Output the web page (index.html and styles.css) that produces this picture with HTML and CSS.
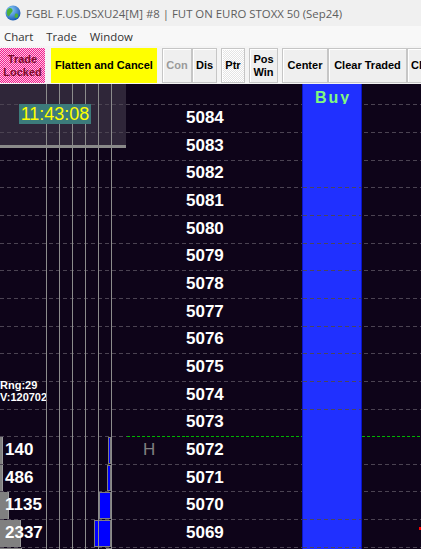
FILE: index.html
```html
<!DOCTYPE html>
<html lang="en">
<head>
    <meta charset="UTF-8">
    <meta name="viewport" content="width=device-width, initial-scale=1.0">
    <title>FGBL F.US.DSXU24[M] #8</title>
    <link rel="stylesheet" href="styles.css">
</head>
<body>
    <div class="window">
        <div class="titlebar">
            <svg class="globe" width="16" height="16" viewBox="0 0 16 16">
                <defs>
                    <radialGradient id="sea" cx="35%" cy="30%" r="75%">
                        <stop offset="0" stop-color="#8fd0ff"/>
                        <stop offset="1" stop-color="#1456b0"/>
                    </radialGradient>
                </defs>
                <circle cx="8" cy="8" r="7.5" fill="url(#sea)"/>
                <path d="M4 3.2c1.6-.6 3.2.4 3.6 1.9s-1 2.6-2 3.6-1 2.6-2.6 2.6C2 9.8 1.6 7.8 2 5.8c.3-1.1 1-2 2-2.6z" fill="#4db03a"/>
                <path d="M10.2 8.8c1-.5 2.6 0 3 1.1s-.5 2.5-1.6 3-2-.5-2-1.6.5-2 .6-2.5z" fill="#4db03a"/>
            </svg>
            <span>FGBL F.US.DSXU24[M] #8 | FUT ON EURO STOXX 50 (Sep24)</span>
        </div>

        <div class="menubar">
            <span>Chart</span>
            <span>Trade</span>
            <span>Window</span>
        </div>

        <div class="toolbar">
            <button class="tb locked">Trade<br>Locked</button>
            <button class="tb flatten">Flatten and Cancel</button>
            <button class="tb con">Con</button>
            <button class="tb dis">Dis</button>
            <button class="tb ptr">Ptr</button>
            <button class="tb poswin">Pos<br>Win</button>
            <button class="tb center">Center</button>
            <button class="tb clear">Clear Traded</button>
            <button class="tb more">Cl</button>
        </div>

        <div class="ladder">
            <div class="clock-panel"></div>
            <div class="clock">11:43:08</div>

            <div class="row head">
                <div class="vol"></div><div class="profile"></div><div class="gap"></div><div class="mark"></div>
                <div class="price"></div><div class="buy"><span class="buy-label">Buy</span></div><div class="side"></div>
            </div>

            <div class="row">
                <div class="vol"></div><div class="profile"></div><div class="gap"></div><div class="mark"></div>
                <div class="price">5084</div><div class="buy"></div><div class="side"></div>
            </div>
            <div class="row">
                <div class="vol"></div><div class="profile"></div><div class="gap"></div><div class="mark"></div>
                <div class="price">5083</div><div class="buy"></div><div class="side"></div>
            </div>
            <div class="row">
                <div class="vol"></div><div class="profile"></div><div class="gap"></div><div class="mark"></div>
                <div class="price">5082</div><div class="buy"></div><div class="side"></div>
            </div>
            <div class="row">
                <div class="vol"></div><div class="profile"></div><div class="gap"></div><div class="mark"></div>
                <div class="price">5081</div><div class="buy x"></div><div class="side"></div>
            </div>
            <div class="row">
                <div class="vol"></div><div class="profile"></div><div class="gap"></div><div class="mark"></div>
                <div class="price">5080</div><div class="buy x"></div><div class="side"></div>
            </div>
            <div class="row">
                <div class="vol"></div><div class="profile"></div><div class="gap"></div><div class="mark"></div>
                <div class="price">5079</div><div class="buy x"></div><div class="side"></div>
            </div>
            <div class="row">
                <div class="vol"></div><div class="profile"></div><div class="gap"></div><div class="mark"></div>
                <div class="price">5078</div><div class="buy x"></div><div class="side"></div>
            </div>
            <div class="row">
                <div class="vol"></div><div class="profile"></div><div class="gap"></div><div class="mark"></div>
                <div class="price">5077</div><div class="buy x"></div><div class="side"></div>
            </div>
            <div class="row">
                <div class="vol"></div><div class="profile"></div><div class="gap"></div><div class="mark"></div>
                <div class="price">5076</div><div class="buy x"></div><div class="side"></div>
            </div>
            <div class="row">
                <div class="vol"></div><div class="profile"></div><div class="gap"></div><div class="mark"></div>
                <div class="price">5075</div><div class="buy x"></div><div class="side"></div>
            </div>
            <div class="row">
                <div class="vol"><div class="stats">Rng:29<br>V:120702</div></div><div class="profile"></div><div class="gap"></div><div class="mark"></div>
                <div class="price">5074</div><div class="buy x"></div><div class="side"></div>
            </div>
            <div class="row">
                <div class="vol"></div><div class="profile"></div><div class="gap"></div><div class="mark"></div>
                <div class="price">5073</div><div class="buy x"></div><div class="side"></div>
            </div>

            <!-- last traded price: green line on top -->
            <div class="row last">
                <div class="vol"><div class="vbar" style="width: 3px"></div><span class="count">140</span></div>
                <div class="profile"><div class="pbar" style="width: 3px"></div></div>
                <div class="gap"></div><div class="mark">H</div>
                <div class="price">5072</div><div class="buy"></div><div class="side"></div>
            </div>
            <div class="row">
                <div class="vol"><div class="vbar" style="width: 3px"></div><span class="count">486</span></div>
                <div class="profile"><div class="pbar" style="width: 4px"></div></div>
                <div class="gap"></div><div class="mark"></div>
                <div class="price">5071</div><div class="buy"></div><div class="side"></div>
            </div>
            <div class="row">
                <div class="vol"><div class="vbar" style="width: 9px"></div><span class="count">1135</span></div>
                <div class="profile"><div class="pbar" style="width: 12px"></div></div>
                <div class="gap"></div><div class="mark"></div>
                <div class="price">5070</div><div class="buy"></div><div class="side"></div>
            </div>
            <div class="row">
                <div class="vol"><div class="vbar" style="width: 21px"></div><span class="count">2337</span></div>
                <div class="profile"><div class="pbar" style="width: 17px"></div></div>
                <div class="gap"></div><div class="mark"></div>
                <div class="price">5069</div><div class="buy x"></div><div class="side"><i class="tick"></i></div>
            </div>
            <div class="row">
                <div class="vol"><div class="vbar" style="width: 22px"></div></div>
                <div class="profile"><div class="pbar sell" style="width: 5px"></div></div>
                <div class="gap"></div><div class="mark"></div>
                <div class="price"></div><div class="buy x"></div><div class="side"></div>
            </div>
        </div>
    </div>
</body>
</html>
```

FILE: styles.css
```css
body {
    margin: 0;
    background: #0e0419;
    font-family: 'Liberation Sans', Arial, sans-serif;
    overflow: hidden;
}
.window {
    width: 421px;
    height: 549px;
    display: flex;
    flex-direction: column;
    overflow: hidden;
}

/* window chrome */
.titlebar {
    height: 26px;
    flex: none;
    display: flex;
    align-items: center;
    gap: 5px;
    padding-left: 5px;
    background: #f0f0f0;
    color: #5e5e5e;
    font: 11.4px 'Open Sans', sans-serif;
    white-space: nowrap;
}
.globe {
    flex: none;
}
.menubar {
    height: 20px;
    flex: none;
    display: flex;
    align-items: center;
    gap: 13px;
    padding-left: 4px;
    background: #f8f8f8;
    color: #333;
    font: 11.4px 'Open Sans', sans-serif;
}

/* toolbar buttons */
.toolbar {
    height: 38px;
    flex: none;
    display: flex;
    align-items: flex-start;
    padding-top: 2px;
    box-sizing: border-box;
    background: #f4f4f4;
    white-space: nowrap;
}
.tb {
    height: 35px;
    flex: none;
    padding: 0;
    margin: 0;
    border: 1px solid #c6c6c6;
    box-shadow: inset 1px 1px 0 #fff;
    background: #efefef;
    color: #000;
    font: bold 11px/13px 'Liberation Sans', Arial, sans-serif;
    overflow: hidden;
}
.tb.locked {
    width: 45px;
    border: none;
    box-shadow: none;
    color: #7d0a2c;
    background: repeating-conic-gradient(#f0208c 0 25%, #ffc4e4 0 50%) 0 0 / 2px 2px;
}
.tb.flatten {
    width: 106px;
    margin-left: 6px;
    border: none;
    box-shadow: none;
    background: #ffff00;
}
.tb.con {
    width: 30px;
    margin-left: 5px;
    color: #9a9a9a;
}
.tb.dis {
    width: 25px;
}
.tb.ptr {
    width: 24px;
    margin-left: 4px;
    background: repeating-conic-gradient(#fff 0 25%, #e4e4e4 0 50%) 0 0 / 2px 2px;
}
.tb.poswin {
    width: 29px;
    margin-left: 4px;
}
.tb.center {
    width: 46px;
    margin-left: 4px;
}
.tb.clear {
    width: 79px;
}
.tb.more {
    width: 40px;
    text-align: left;
    padding-left: 3px;
}

/* price ladder */
.ladder {
    flex: 1;
    position: relative;
    z-index: 0;
    background: #0e0419;
    overflow: hidden;
}
.clock-panel {
    position: absolute;
    left: 0;
    top: 0;
    width: 126px;
    height: 61px;
    border-bottom: 3px solid #8a8a8a;
    background: #2f2639;
    z-index: -1;
}
.clock {
    position: absolute;
    left: 19px;
    top: 20px;
    width: 72px;
    height: 20px;
    z-index: 1;
    background: #3c7b7b;
    color: #ffff00;
    font-size: 18px;
    line-height: 20px;
    text-align: center;
}
.row {
    height: 27.67px;
    display: grid;
    grid-template-columns: 46px 66px 15px 59px 116px 60px 59px;
    background: repeating-linear-gradient(to right, #4b4352 0 4px, transparent 4px 7px) left top / 100% 1px no-repeat;
}
.row.head {
    height: 20.3px;
    background: none;
}
.vol {
    display: grid;
    min-width: 0;
}
.vol > * {
    grid-area: 1 / 1;
}
.vbar {
    margin-top: 1px;
    background: #808080;
    box-shadow: inset -1px 0 0 #9a9a9a;
}
.count {
    align-self: center;
    padding-left: 5px;
    color: #fff;
    font-weight: bold;
    font-size: 17px;
    line-height: 20px;
}
.stats {
    margin-top: -2px;
    color: #fff;
    font-weight: bold;
    font-size: 11px;
    line-height: 12px;
    white-space: nowrap;
}
.profile {
    position: relative;
    display: flex;
    justify-content: flex-end;
    padding: 1px 1px 0 0;
}
/* volume profile grid, drawn over the bars */
.profile::after {
    content: '';
    position: absolute;
    inset: 0;
    background: repeating-linear-gradient(to right, #8c8c8c 0 1px, transparent 1px 13px);
}
.pbar {
    box-sizing: border-box;
    border: 1px solid #808080;
    background: #0000ff;
}
.pbar.sell {
    background: #ff0000;
}
.mark {
    display: flex;
    align-items: center;
    padding-left: 16px;
    color: #808080;
    font-size: 17px;
}
.price {
    display: flex;
    align-items: center;
    color: #fff;
    font-weight: bold;
    font-size: 17px;
}
.buy {
    border-left: 1px solid #0a14c8;
    border-right: 1px solid #0a14c8;
    background: #2030ff;
}
.buy.x {
    background: repeating-linear-gradient(to right, #4a4560 0 4px, transparent 4px 7px) left top / 100% 1px no-repeat, #2030ff;
}
.buy-label {
    display: block;
    padding: 6px 0 0 2px;
    color: #80f880;
    font-weight: bold;
    font-size: 16px;
    line-height: 16px;
    letter-spacing: 2px;
    text-align: center;
}
.side {
    display: flex;
    justify-content: flex-end;
}
.tick {
    width: 2px;
    height: 3px;
    margin-top: 8px;
    background: #ff0000;
}
.row.last .mark,
.row.last .price,
.row.last .side {
    background: repeating-linear-gradient(to right, #00b400 0 3px, transparent 3px 5px) left top / 100% 1px no-repeat, #0e0419;
}
```
